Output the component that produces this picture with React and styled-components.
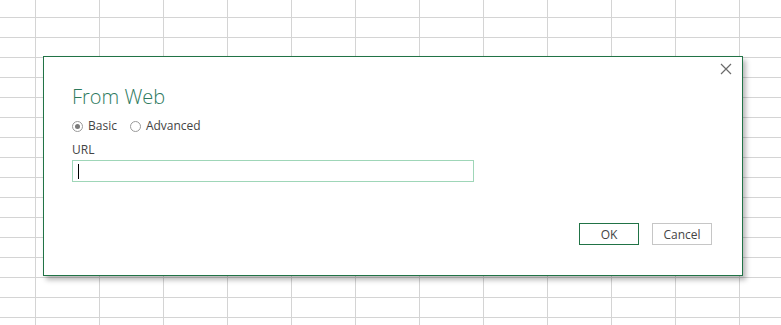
import React from "react";
import styled, { createGlobalStyle } from "styled-components";

const Global = createGlobalStyle`
  html, body { margin: 0; padding: 0; }
  body {
    width: 781px;
    height: 325px;
    overflow: hidden;
    font-family: "Open Sans", "Noto Sans", sans-serif;
    background-color: #ffffff;
    background-image:
      linear-gradient(to right, #d4d4d4 1px, transparent 1px),
      linear-gradient(to bottom, #d4d4d4 1px, transparent 1px);
    background-size: 64px 20px;
    background-position: 35px 17px;
  }
`;

const Sheet = styled.div`
  padding: 56px 0 0 43px;
`;

const Dialog = styled.div`
  position: relative;
  box-sizing: border-box;
  width: 700px;
  height: 220px;
  background: #fff;
  border: 1px solid #217346;
  box-shadow: 3px 4px 5px rgba(0, 0, 0, 0.28);
  padding: 26px 30px 30px 28px;
  display: flex;
  flex-direction: column;
`;

const Close = styled.button`
  position: absolute;
  top: 5px;
  right: 9px;
  width: 14px;
  height: 14px;
  padding: 0;
  border: 0;
  background: transparent;
  display: flex;
  align-items: center;
  justify-content: center;
`;

const Title = styled.h1`
  margin: 0;
  font-weight: 300;
  font-size: 20px;
  line-height: 28px;
  color: #2e7a5e;
`;

const RadioRow = styled.div`
  display: flex;
  align-items: center;
  gap: 13px;
  margin-top: 7px;
`;

const RadioLabel = styled.label`
  display: flex;
  align-items: center;
  gap: 5px;
  font-size: 12px;
  line-height: 16px;
  color: #444;
`;

const RadioCircle = styled.span`
  box-sizing: border-box;
  width: 11px;
  height: 11px;
  border-radius: 50%;
  border: 1px solid #9a9a9a;
  display: flex;
  align-items: center;
  justify-content: center;
  &::after {
    content: "";
    width: 5px;
    height: 5px;
    border-radius: 50%;
    background: ${(p) => (p.$checked ? "#7a7a7a" : "transparent")};
  }
`;

const FieldLabel = styled.div`
  margin-top: 8px;
  font-size: 12px;
  line-height: 16px;
  color: #444;
`;

const Input = styled.div`
  box-sizing: border-box;
  width: 402px;
  height: 22px;
  margin-top: 2px;
  border: 1px solid #9fd6b8;
  display: flex;
  align-items: center;
  padding-left: 5px;
`;

const Caret = styled.span`
  width: 1px;
  height: 15px;
  background: #000;
`;

const Buttons = styled.div`
  margin-top: auto;
  display: flex;
  justify-content: flex-end;
  gap: 13px;
`;

const Button = styled.button`
  box-sizing: border-box;
  width: 60px;
  height: 22px;
  padding: 0;
  background: #fff;
  border: 1px solid ${(p) => (p.$primary ? "#217346" : "#c6c6c6")};
  font-family: "Open Sans", "Noto Sans", sans-serif;
  font-size: 12px;
  color: #444;
`;

export default function App() {
  return (
    <>
      <Global />
      <Sheet>
        <Dialog>
          <Close aria-label="Close">
            <svg width="12" height="12" viewBox="0 0 12 12">
              <path d="M1 1 L11 11 M11 1 L1 11" stroke="#6b6b6b" strokeWidth="1.2" fill="none" />
            </svg>
          </Close>
          <Title>From Web</Title>
          <RadioRow>
            <RadioLabel>
              <RadioCircle $checked />
              Basic
            </RadioLabel>
            <RadioLabel>
              <RadioCircle />
              Advanced
            </RadioLabel>
          </RadioRow>
          <FieldLabel>URL</FieldLabel>
          <Input>
            <Caret />
          </Input>
          <Buttons>
            <Button $primary>OK</Button>
            <Button>Cancel</Button>
          </Buttons>
        </Dialog>
      </Sheet>
    </>
  );
}
